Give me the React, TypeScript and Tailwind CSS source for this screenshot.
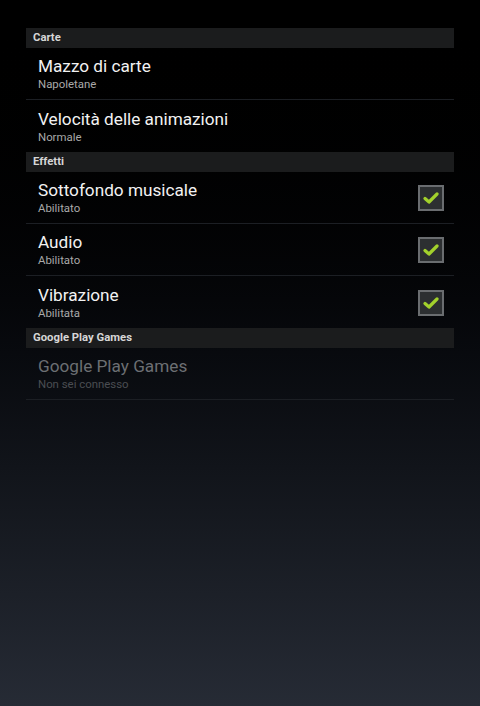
import React from "react";

type Pref = { title: string; summary: string; checked?: boolean; disabled?: boolean };

const sections: { header: string; items: Pref[] }[] = [
  {
    header: "Carte",
    items: [
      { title: "Mazzo di carte", summary: "Napoletane" },
      { title: "Velocità delle animazioni", summary: "Normale" },
    ],
  },
  {
    header: "Effetti",
    items: [
      { title: "Sottofondo musicale", summary: "Abilitato", checked: true },
      { title: "Audio", summary: "Abilitato", checked: true },
      { title: "Vibrazione", summary: "Abilitata", checked: true },
    ],
  },
  {
    header: "Google Play Games",
    items: [{ title: "Google Play Games", summary: "Non sei connesso", disabled: true }],
  },
];

function CheckBox() {
  return (
    <div className="w-[26px] h-[26px] border-2 border-[#6a6d70] bg-[#2c2f31] flex items-center justify-center">
      <svg width="16" height="14" viewBox="0 0 16 14">
        <path d="M2 7.5 L6 11 L14 3" fill="none" stroke="#a2d12c" strokeWidth="3.2" strokeLinecap="round" strokeLinejoin="round" />
      </svg>
    </div>
  );
}

export default function App() {
  return (
    <div
      className="w-[480px] h-[706px] bg-gradient-to-b from-[#000000] to-[#262b35] pt-[28px] px-[26px]"
      style={{ fontFamily: "Roboto, 'Noto Sans', sans-serif" }}
    >
      {sections.map((s) => (
        <div key={s.header}>
          <div className="h-[20px] bg-[#1b1c1d] px-[7px] pt-[1px] flex items-center text-[11.3px] font-bold text-[#d6d6d6]">
            {s.header}
          </div>
          {s.items.map((item, i) => (
            <div
              key={item.title}
              className={`h-[52px] flex items-center pl-[12px] pr-[10px] pt-[1px] ${
                i < s.items.length - 1 || item.disabled ? "border-b border-[#1c1f24]" : ""
              }`}
            >
              <div className="flex-1 flex flex-col">
                <span className={`text-[17.2px] leading-[21px] ${item.disabled ? "text-[#6c6f73]" : "text-[#f2f2f2]"}`}>
                  {item.title}
                </span>
                <span className={`text-[11.4px] leading-[15px] ${item.disabled ? "text-[#4a4d52]" : "text-[#a9a9a9]"}`}>
                  {item.summary}
                </span>
              </div>
              {item.checked && <CheckBox />}
            </div>
          ))}
        </div>
      ))}
    </div>
  );
}
